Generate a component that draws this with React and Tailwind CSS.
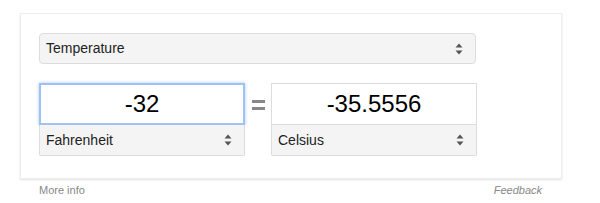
import React, { useState } from 'react';

function Arrows() {
  return (
    <svg width="8" height="12" viewBox="0 0 8 12" className="shrink-0">
      <path d="M4 0.5 L7.5 4.5 L0.5 4.5 Z" fill="#555" />
      <path d="M0.5 7.5 L7.5 7.5 L4 11.5 Z" fill="#555" />
    </svg>
  );
}

function Select({ label, className = '' }) {
  return (
    <div
      className={`flex items-center justify-between bg-[#f4f4f4] border border-[#dcdcdc] text-[14px] text-[#222] ${className}`}
    >
      <span>{label}</span>
      <Arrows />
    </div>
  );
}

function Unit({ value, unit, focused }) {
  return (
    <div className="flex flex-col w-[206px]">
      <div
        className={`h-[42px] flex items-center justify-center bg-white text-[24px] text-black ${
          focused
            ? 'border-2 border-[#9fc2f0] shadow-[0_0_3px_rgba(77,144,254,0.5)]'
            : 'border border-[#dcdcdc]'
        }`}
      >
        {value}
      </div>
      <Select label={unit} className="h-[31px] pl-[6px] pr-[12px] border-t-0 rounded-b-[2px]" />
    </div>
  );
}

export default function App() {
  const [f] = useState('-32');
  return (
    <div className="w-[600px] h-[203px] bg-white pt-[13px] pl-[20px]" style={{ fontFamily: '"Liberation Sans", Arial, sans-serif' }}>
      <div className="w-[542px] h-[166px] bg-white border border-[#eeeeee] shadow-[0_1px_2px_rgba(0,0,0,0.12)] pt-[19px] pl-[18px]">
        <Select label="Temperature" className="w-[437px] h-[31px] rounded-[4px] pl-[6px] pr-[12px]" />
        <div className="flex items-start mt-[19px]">
          <Unit value={f} unit="Fahrenheit" focused />
          <div className="w-[26px] flex flex-col items-center gap-[4px] pt-[17px]">
            <div className="w-[13px] h-[3px] bg-[#888]" />
            <div className="w-[13px] h-[3px] bg-[#888]" />
          </div>
          <Unit value="-35.5556" unit="Celsius" />
        </div>
      </div>
      <div className="w-[542px] flex justify-between pl-[19px] pr-[20px] mt-[3px] text-[11px] text-[#888]">
        <span>More info</span>
        <span className="italic">Feedback</span>
      </div>
    </div>
  );
}
